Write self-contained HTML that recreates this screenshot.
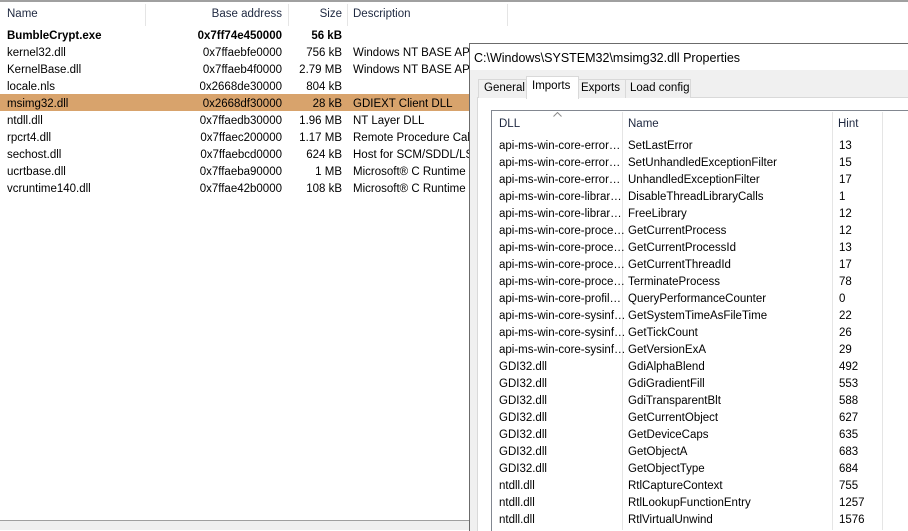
<!DOCTYPE html><html><head><style>
body{margin:0;width:908px;height:530px;overflow:hidden;background:#fff;font-family:"Liberation Sans",sans-serif;font-size:11.5px;color:#000;position:relative}
.a{position:absolute;white-space:nowrap}
.r{text-align:right}
</style></head><body>
<div class="a" style="left:0;top:0;width:908px;height:2px;background:#a0a0a0"></div>
<div class="a" style="left:145px;top:4px;width:1px;height:22px;background:#e5e5e5"></div>
<div class="a" style="left:288px;top:4px;width:1px;height:22px;background:#e5e5e5"></div>
<div class="a" style="left:347px;top:4px;width:1px;height:22px;background:#e5e5e5"></div>
<div class="a" style="left:507px;top:4px;width:1px;height:22px;background:#e5e5e5"></div>
<div class="a" style="left:7px;top:8px;color:#1e2840">Name</div>
<div class="a r" style="left:180px;width:102px;top:8px;color:#1e2840">Base address</div>
<div class="a r" style="left:300px;width:42px;top:8px;color:#1e2840">Size</div>
<div class="a" style="left:353px;top:8px;color:#1e2840">Description</div>
<div class="a" style="left:0;top:94px;width:470px;height:17px;background:#d8a36c"></div>
<div id="L"></div>
<div class="a" style="left:0;top:520px;width:470px;height:1px;background:#a0a0a0"></div>
<div class="a" style="left:0;top:521px;width:470px;height:9px;background:#f0f0f0"></div>
<!-- dialog -->
<div class="a" style="left:469px;top:43px;width:439px;height:487px;background:#f0f0f0;border-left:1px solid #6b6b6b;border-top:1px solid #6b6b6b"></div>
<div class="a" style="left:470px;top:44px;width:438px;height:26px;background:#fff"></div>
<div class="a" style="left:474px;top:51px;font-size:12.5px">C:\Windows\SYSTEM32\msimg32.dll Properties</div>
<div class="a" style="left:477px;top:97px;width:431px;height:433px;background:#fff;border-top:1px solid #d9d9d9;border-left:1px solid #d9d9d9"></div>
<div class="a" style="left:478px;top:79px;width:47px;height:18px;background:#f0f0f0;border:1px solid #d9d9d9;border-bottom:none"></div>
<div class="a" style="left:484px;top:82px">General</div>
<div class="a" style="left:526px;top:76px;width:51px;height:22px;background:#fff;border:1px solid #d9d9d9;border-bottom:none"></div>
<div class="a" style="left:532px;top:80px">Imports</div>
<div class="a" style="left:578px;top:79px;width:46px;height:18px;background:#f0f0f0;border:1px solid #d9d9d9;border-bottom:none"></div>
<div class="a" style="left:581px;top:82px">Exports</div>
<div class="a" style="left:625px;top:79px;width:64px;height:18px;background:#f0f0f0;border:1px solid #d9d9d9;border-bottom:none"></div>
<div class="a" style="left:630px;top:82px">Load config</div>
<div class="a" style="left:491px;top:110px;width:417px;height:420px;background:#fff;border-top:1px solid #828790;border-left:1px solid #828790"></div>
<svg class="a" style="left:553px;top:112px" width="9" height="5"><path d="M0.5 4.5L4.5 0.5L8.5 4.5" fill="none" stroke="#8a8a8a"/></svg>
<div class="a" style="left:622px;top:112px;width:1px;height:418px;background:#e5e5e5"></div>
<div class="a" style="left:832px;top:112px;width:1px;height:418px;background:#e5e5e5"></div>
<div class="a" style="left:882px;top:112px;width:1px;height:418px;background:#e5e5e5"></div>
<div class="a" style="left:499px;top:118px;color:#1e2840">DLL</div>
<div class="a" style="left:628px;top:118px;color:#1e2840">Name</div>
<div class="a" style="left:838px;top:118px;color:#1e2840">Hint</div>
<div id="R"></div>
<script>
var L=[["BumbleCrypt.exe","0x7ff74e450000","56 kB","",1],["kernel32.dll","0x7ffaebfe0000","756 kB","Windows NT BASE API Client DLL"],["KernelBase.dll","0x7ffaeb4f0000","2.79 MB","Windows NT BASE API Client DLL"],["locale.nls","0x2668de30000","804 kB",""],["msimg32.dll","0x2668df30000","28 kB","GDIEXT Client DLL"],["ntdll.dll","0x7ffaedb30000","1.96 MB","NT Layer DLL"],["rpcrt4.dll","0x7ffaec200000","1.17 MB","Remote Procedure Call Runtime"],["sechost.dll","0x7ffaebcd0000","624 kB","Host for SCM/SDDL/LSA Lookup APIs"],["ucrtbase.dll","0x7ffaeba90000","1 MB","Microsoft® C Runtime Library"],["vcruntime140.dll","0x7ffae42b0000","108 kB","Microsoft® C Runtime Library"]];
var h="";L.forEach(function(r,i){var t=30+i*17,b=r[4]?"font-weight:bold;":"";
h+='<div class="a" style="'+b+'left:7px;top:'+t+'px">'+r[0]+'</div><div class="a r" style="'+b+'left:170px;width:112px;top:'+t+'px">'+r[1]+'</div><div class="a r" style="'+b+'left:290px;width:52px;top:'+t+'px">'+r[2]+'</div><div class="a" style="left:353px;top:'+t+'px">'+r[3]+'</div>';});
document.getElementById("L").innerHTML=h;
var e="api-ms-win-core-error…",l="api-ms-win-core-librar…",p="api-ms-win-core-proce…",s="api-ms-win-core-sysinf…",g="GDI32.dll",n="ntdll.dll";
var R=[[e,"SetLastError",13],[e,"SetUnhandledExceptionFilter",15],[e,"UnhandledExceptionFilter",17],[l,"DisableThreadLibraryCalls",1],[l,"FreeLibrary",12],[p,"GetCurrentProcess",12],[p,"GetCurrentProcessId",13],[p,"GetCurrentThreadId",17],[p,"TerminateProcess",78],["api-ms-win-core-profil…","QueryPerformanceCounter",0],[s,"GetSystemTimeAsFileTime",22],[s,"GetTickCount",26],[s,"GetVersionExA",29],[g,"GdiAlphaBlend",492],[g,"GdiGradientFill",553],[g,"GdiTransparentBlt",588],[g,"GetCurrentObject",627],[g,"GetDeviceCaps",635],[g,"GetObjectA",683],[g,"GetObjectType",684],[n,"RtlCaptureContext",755],[n,"RtlLookupFunctionEntry",1257],[n,"RtlVirtualUnwind",1576]];
h="";R.forEach(function(r,i){var t=140+i*17;h+='<div class="a" style="left:499px;top:'+t+'px">'+r[0]+'</div><div class="a" style="left:628px;top:'+t+'px">'+r[1]+'</div><div class="a" style="left:839px;top:'+t+'px">'+r[2]+'</div>';});
document.getElementById("R").innerHTML=h;
</script>
</body></html>
